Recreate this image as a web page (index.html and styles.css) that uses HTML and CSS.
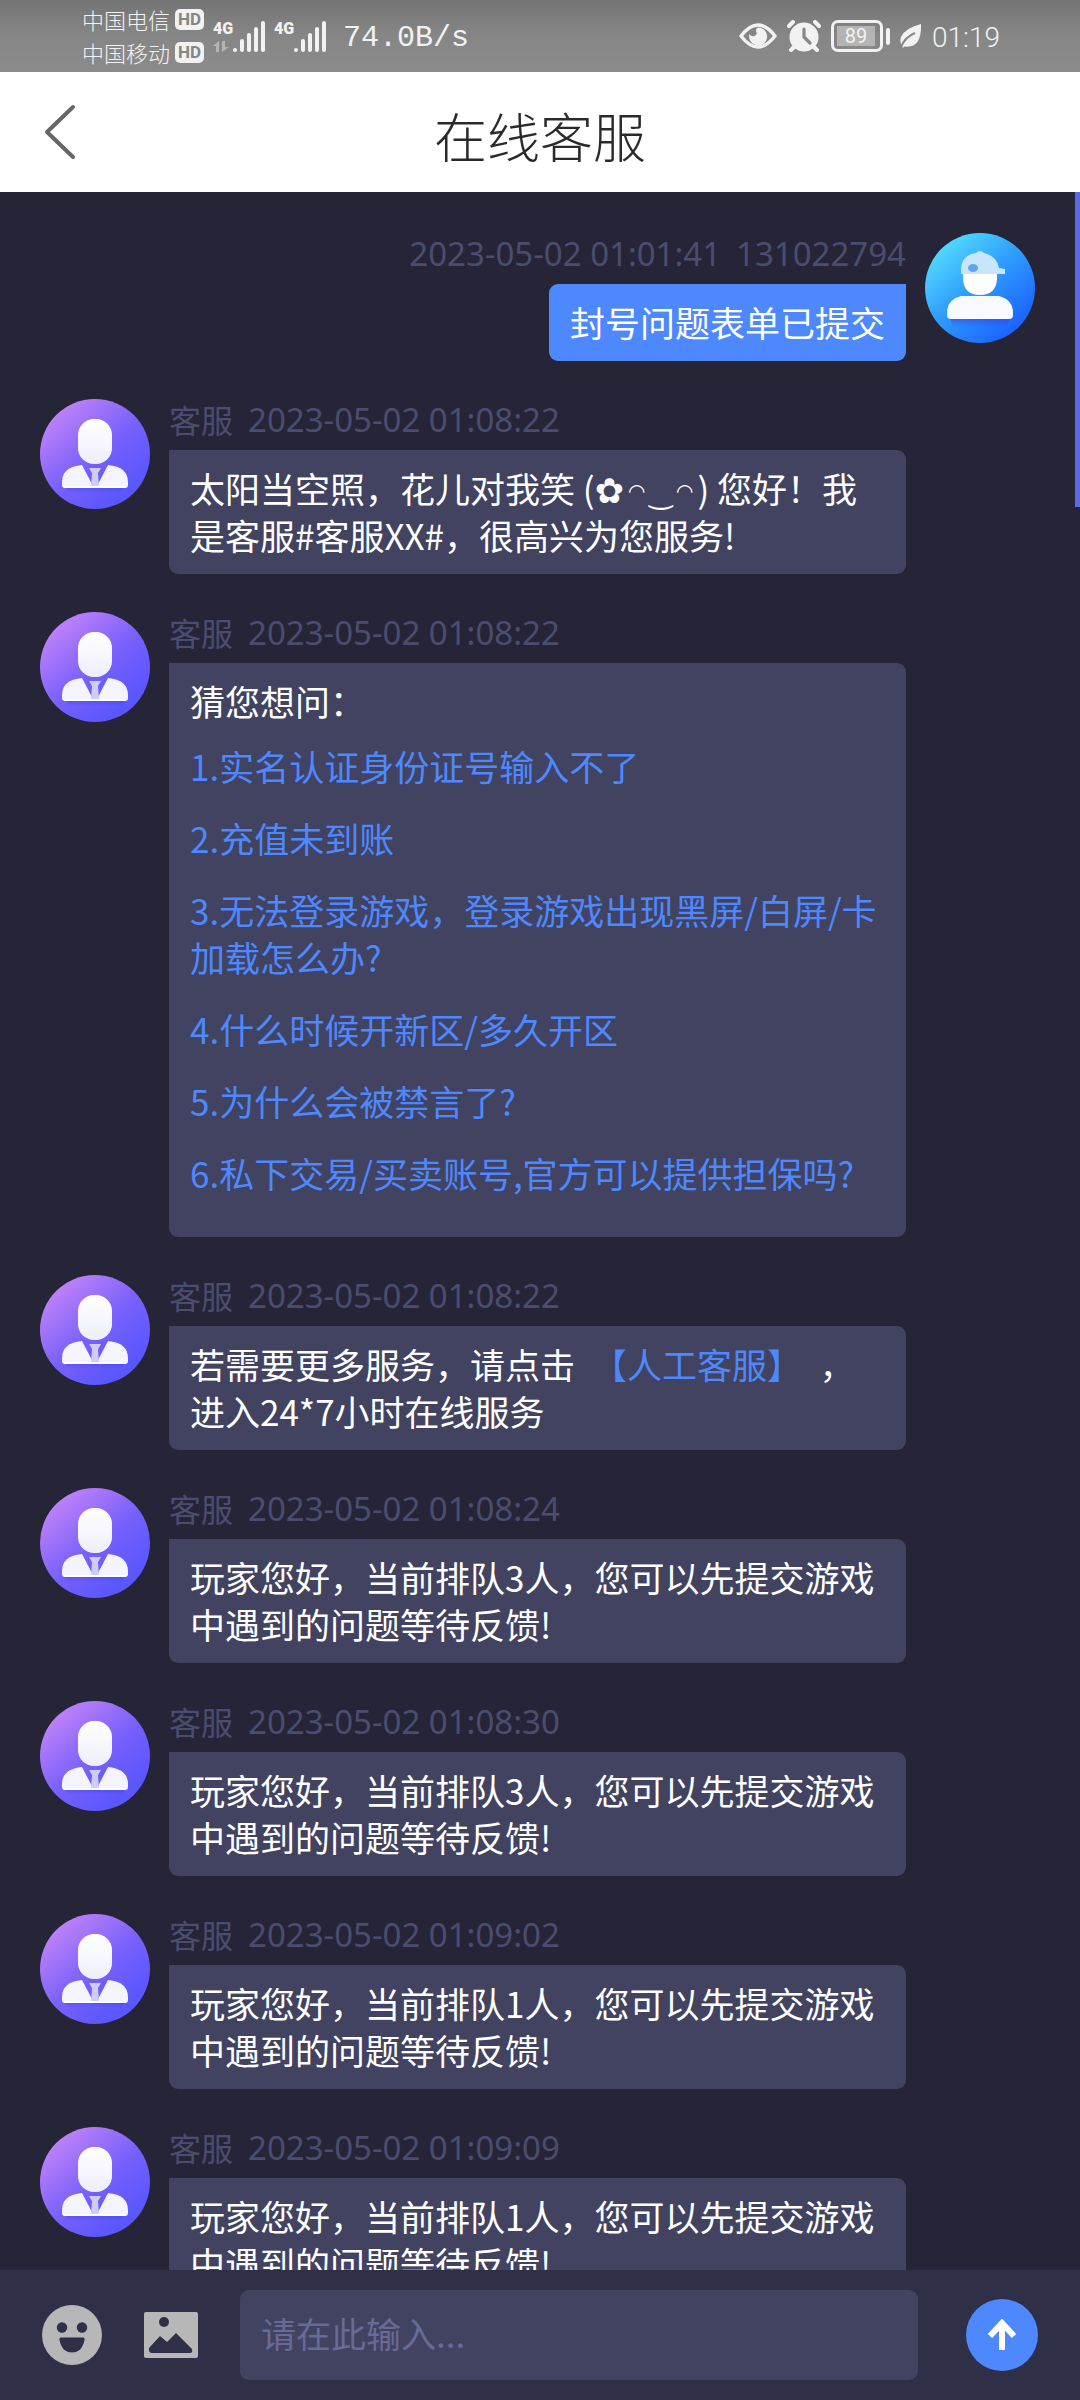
FILE: index.html
```html
<!DOCTYPE html>
<html lang="zh-CN">
<head>
<meta charset="utf-8">
<meta name="viewport" content="width=device-width, initial-scale=1">
<title>在线客服</title>
<link rel="stylesheet" href="styles.css">
</head>
<body>
<svg class="defs" aria-hidden="true">
  <defs>
    <linearGradient id="agent-bg" x1="0.1" y1="0.1" x2="0.75" y2="0.85">
      <stop offset="0" stop-color="#c584f8"/><stop offset="0.6" stop-color="#7760fc"/><stop offset="1" stop-color="#5b57ff"/>
    </linearGradient>
    <linearGradient id="user-bg" x1="0.1" y1="0.1" x2="0.8" y2="0.9">
      <stop offset="0" stop-color="#56dffc"/><stop offset="0.5" stop-color="#2f9cff"/><stop offset="1" stop-color="#1b63ff"/>
    </linearGradient>
    <linearGradient id="agent-body" x1="0" y1="0" x2="0" y2="1">
      <stop offset="0" stop-color="#ffffff"/><stop offset="1" stop-color="#eeeefa"/>
    </linearGradient>
    <linearGradient id="shade" x1="0" y1="0" x2="0" y2="1">
      <stop offset="0" stop-color="#3a39d8" stop-opacity="0.5"/><stop offset="1" stop-color="#3a39d8" stop-opacity="0"/>
    </linearGradient>
  </defs>
  <symbol id="agent" viewBox="0 0 110 110">
    <circle cx="55" cy="55" r="55" fill="url(#agent-bg)"/>
    <path d="M25 86H85L82 94H28Z" fill="url(#shade)"/>
    <rect x="38" y="20" width="34" height="45" rx="16" fill="url(#agent-body)"/>
    <path d="M42 66Q22 68 22 83V86Q22 89 25 89H53V87Z" fill="#f4f4fd"/>
    <path d="M68 66Q88 68 88 83V86Q88 89 85 89H57V87Z" fill="#f4f4fd"/>
    <path d="M49 69H61L58 74L59 88H51L52 74Z" fill="#cfcdf8"/>
    <path d="M24 88H86" stroke="#fff" stroke-width="2"/>
  </symbol>
  <symbol id="user" viewBox="0 0 110 110">
    <circle cx="55" cy="55" r="55" fill="url(#user-bg)"/>
    <path d="M25 86H85L82 94H28Z" fill="url(#shade)"/>
    <path d="M38 40H72V46Q71 62 55 62Q39 62 38 46Z" fill="#fff"/>
    <path d="M36 41V35Q37 22 51 20Q55 16 59 20Q72 23 74 35L80 36V41Z" fill="#c9e4fd"/>
    <ellipse cx="48" cy="35" rx="5" ry="4" fill="#5ba8ee"/>
    <path d="M36 63H74Q88 67 88 80V82Q88 86 84 86H26Q22 86 22 82V80Q22 67 36 63Z" fill="#f7fbff"/>
  </symbol>
  <symbol id="signal" viewBox="0 0 33 31">
    <g fill="#f2f2f2"><circle cx="2" cy="29" r="2"/><rect x="7" y="18" width="4" height="13" rx="2"/><rect x="14" y="12" width="4" height="19" rx="2"/><rect x="21" y="6" width="4" height="25" rx="2"/><rect x="28" y="0" width="4" height="31" rx="2"/></g>
  </symbol>
</svg>

<div class="app">
  <div class="status">
    <div class="carriers">
      <div class="carrier"><span>中国电信</span><b class="hd">HD</b></div>
      <div class="carrier"><span>中国移动</span><b class="hd">HD</b></div>
    </div>
    <div class="net">
      <div class="gen"><b>4G</b>
        <svg width="18" height="12" viewBox="0 0 18 12" fill="#b4b4b4"><path d="M6 0V11H3V5H0ZM9 0H12V6H16L9 11Z"/></svg>
      </div>
      <svg width="33" height="31"><use href="#signal"/></svg>
    </div>
    <div class="net">
      <div class="gen"><b>4G</b></div>
      <svg width="33" height="31"><use href="#signal"/></svg>
    </div>
    <span class="speed">74.0B/s</span>
    <div class="status-right">
      <svg width="38" height="28" viewBox="0 0 38 28"><path d="M2 14Q19-8 36 14Q19 36 2 14Z" fill="none" stroke="#f2f2f2" stroke-width="3.4" stroke-linejoin="round"/><path d="M19 5.500A9 9 0 1 1 10.500 12Q12 15 15.500 14Q19 12.500 17 9Q16.500 7 19 5.500Z" fill="#f2f2f2"/></svg>
      <svg width="34" height="32" viewBox="0 0 34 32"><circle cx="17" cy="17" r="14.500" fill="#f2f2f2"/><path d="M2 6L6 2M32 6L28 2M4 30L8 26M30 30L26 26" stroke="#f2f2f2" stroke-width="4" stroke-linecap="round"/><path d="M17 9V17L23 23" fill="none" stroke="#888" stroke-width="3.200" stroke-linecap="round" stroke-linejoin="round"/></svg>
      <div class="battery"><span class="battery-level">89</span></div>
      <svg class="leaf" width="22" height="24" viewBox="0 0 22 24"><path d="M21 0Q22 25 4 22.500L3 24Q-1 18 1 13Q5 4 21 0Z" fill="#f2f2f2"/><path d="M1 23Q5 13 15 9" fill="none" stroke="#888" stroke-width="2"/></svg>
      <span class="clock">01:19</span>
    </div>
  </div>

  <header class="header">
    <button class="back" type="button" aria-label="返回"><svg width="32" height="56" viewBox="0 0 32 56"><path d="M29 3L3 28L29 53" fill="none" stroke="#666" stroke-width="4" stroke-linecap="round" stroke-linejoin="round"/></svg></button>
    <h1 class="title">在线客服</h1>
  </header>

  <main class="chat">
    <article class="msg msg-user">
      <div class="body">
        <p class="meta"><time>2023-05-02 01:01:41</time><span>131022794</span></p>
        <div class="bubble">封号问题表单已提交</div>
      </div>
      <svg class="avatar"><use href="#user"/></svg>
    </article>
    <article class="msg">
      <svg class="avatar"><use href="#agent"/></svg>
      <div class="body">
        <p class="meta"><span>客服</span><time>2023-05-02 01:08:22</time></p>
        <div class="bubble">太阳当空照，花儿对我笑 (<span class="kaomoji"><span class="flower">✿</span><span class="eye">◠</span>‿<span class="eye">◠</span></span>) 您好！我是客服#客服XX#，很高兴为您服务!</div>
      </div>
    </article>
    <article class="msg">
      <svg class="avatar"><use href="#agent"/></svg>
      <div class="body">
        <p class="meta"><span>客服</span><time>2023-05-02 01:08:22</time></p>
        <div class="bubble">猜您想问：
          <ul class="faq">
            <li><a href="#">1.实名认证身份证号输入不了</a></li>
            <li><a href="#">2.充值未到账</a></li>
            <li><a href="#">3.无法登录游戏，登录游戏出现黑屏/白屏/卡加载怎么办?</a></li>
            <li><a href="#">4.什么时候开新区/多久开区</a></li>
            <li><a href="#">5.为什么会被禁言了?</a></li>
            <li><a href="#">6.私下交易/买卖账号,官方可以提供担保吗?</a></li>
          </ul>
        </div>
      </div>
    </article>
    <article class="msg">
      <svg class="avatar"><use href="#agent"/></svg>
      <div class="body">
        <p class="meta"><span>客服</span><time>2023-05-02 01:08:22</time></p>
        <div class="bubble">若需要更多服务，请点击<a class="human" href="#">【人工客服】</a>，进入24*7小时在线服务</div>
      </div>
    </article>
    <article class="msg">
      <svg class="avatar"><use href="#agent"/></svg>
      <div class="body">
        <p class="meta"><span>客服</span><time>2023-05-02 01:08:24</time></p>
        <div class="bubble">玩家您好，当前排队3人，您可以先提交游戏中遇到的问题等待反馈!</div>
      </div>
    </article>
    <article class="msg">
      <svg class="avatar"><use href="#agent"/></svg>
      <div class="body">
        <p class="meta"><span>客服</span><time>2023-05-02 01:08:30</time></p>
        <div class="bubble">玩家您好，当前排队3人，您可以先提交游戏中遇到的问题等待反馈!</div>
      </div>
    </article>
    <article class="msg">
      <svg class="avatar"><use href="#agent"/></svg>
      <div class="body">
        <p class="meta"><span>客服</span><time>2023-05-02 01:09:02</time></p>
        <div class="bubble">玩家您好，当前排队1人，您可以先提交游戏中遇到的问题等待反馈!</div>
      </div>
    </article>
    <article class="msg">
      <svg class="avatar"><use href="#agent"/></svg>
      <div class="body">
        <p class="meta"><span>客服</span><time>2023-05-02 01:09:09</time></p>
        <div class="bubble">玩家您好，当前排队1人，您可以先提交游戏中遇到的问题等待反馈!</div>
      </div>
    </article>
    <div class="scroll-thumb"></div>
  </main>

  <form class="composer">
    <button class="tool" type="button" aria-label="表情"><svg width="60" height="60" viewBox="0 0 60 60"><circle cx="30" cy="30" r="30" fill="#b7b7b7"/><circle cx="20" cy="22.500" r="5.200" fill="#2f3048"/><circle cx="40" cy="22.500" r="5.200" fill="#2f3048"/><path d="M19 32.500H41Q43 32.500 42.500 35Q40 47.500 30 47.500Q20 47.500 17.500 35Q17 32.500 19 32.500Z" fill="#2f3048"/></svg></button>
    <button class="tool" type="button" aria-label="图片"><svg width="54" height="46" viewBox="0 0 54 46"><rect width="54" height="46" rx="2" fill="#b7b7b7"/><circle cx="20" cy="10" r="5" fill="#2f3048"/><path d="M5 36L16 24L23 30L32 21L48 37Q49 41 46 41H8Q5 41 5 38Z" fill="#2f3048"/></svg></button>
    <input class="field" type="text" placeholder="请在此输入..." aria-label="请在此输入">
    <button class="send" type="submit" aria-label="发送"><svg width="30" height="32" viewBox="0 0 30 32"><path d="M15 31V4M3 17L15 4L27 17" fill="none" stroke="#fff" stroke-width="6"/></svg></button>
  </form>
</div>
</body>
</html>
```
FILE: styles.css
```css
* { box-sizing: border-box; }

body {
  margin: 0;
  font-family: "Noto Sans CJK SC", sans-serif;
  font-size: 35px;
  line-height: 47px;
  color: #fff;
  background: #252537;
}

button { padding: 0; border: 0; background: none; display: flex; }
a { color: #4d88ff; text-decoration: none; }
h1, p, ul { margin: 0; padding: 0; }
svg { display: block; flex: none; }

.defs { position: absolute; width: 0; height: 0; }

.app { display: flex; flex-direction: column; height: 100vh; }

/* System status bar */
.status {
  flex: none;
  display: flex;
  align-items: center;
  height: 72px;
  padding: 0 80px 0 82px;
  color: #f2f2f2;
  background: linear-gradient(#747474, #868686 50%, #8b8b8b);
}
.carriers { display: flex; flex-direction: column; gap: 12px; margin-right: 9px; }
.carrier { display: flex; align-items: center; gap: 5px; font-size: 22px; font-weight: 300; line-height: 21px; }
.hd {
  width: 29px;
  border-radius: 5px;
  background: #f2f2f2;
  color: #858585;
  font: bold 17px/21px "Roboto", sans-serif;
  text-align: center;
}
.net { display: flex; margin-right: 8px; }
.gen { width: 20px; height: 31px; font: bold 16px/16px "Roboto", sans-serif; }
.gen svg { margin-top: 4px; }
.speed { margin-left: 8px; padding-top: 4px; font: 30px/36px "Liberation Mono", monospace; }
.status-right { display: flex; align-items: center; gap: 10px; margin-left: auto; }
.battery {
  position: relative;
  width: 52px;
  height: 32px;
  padding: 3px;
  margin-right: 7px;
  border: 3px solid #f2f2f2;
  border-radius: 7px;
}
.battery::after {
  content: "";
  position: absolute;
  top: 5px;
  right: -10px;
  width: 4px;
  height: 17px;
  border-radius: 2px;
  background: #f2f2f2;
}
.battery-level { display: block; width: 38px; height: 20px; background: #b4b4b4; font: 20px/20px "Roboto", sans-serif; text-align: center; }
.clock { padding-top: 4px; font: 300 28px/36px "Roboto", sans-serif; }

/* Title bar */
.header {
  flex: none;
  display: grid;
  grid-template-columns: 1fr auto 1fr;
  align-items: center;
  height: 120px;
  padding: 0 44px;
  background: #fff;
}
.title { padding-top: 6px; color: #2a2a2a; font-size: 53px; font-weight: 300; line-height: 72px; }

/* Conversation */
.chat {
  position: relative;
  flex: 1;
  min-height: 0;
  overflow: hidden;
  display: flex;
  flex-direction: column;
  gap: 38px;
  padding: 41px 45px 0 40px;
}
.scroll-thumb { position: absolute; top: 0; right: 0; width: 5px; height: 315px; background: #5b69ec; }
.msg { flex: none; display: flex; gap: 19px; padding-right: 129px; }
.msg-user { justify-content: flex-end; padding-right: 0; }
.avatar { width: 110px; height: 110px; }
.body { flex: 1; min-width: 0; }
.meta {
  display: flex;
  gap: 15px;
  height: 51px;
  color: #4b4d70;
  font: 32px/40px "Noto Sans CJK SC", sans-serif;
}
.meta time, .msg-user .meta { font: 33px/41px "Noto Sans", sans-serif; }
.bubble { padding: 14px 21px 16px; border-radius: 0 9px 9px 9px; background: #414361; }
.msg-user .body { display: flex; flex-direction: column; align-items: flex-end; }
.msg-user .bubble { border-radius: 9px 0 9px 9px; background: #4d88ff; }
.kaomoji { font-family: "DejaVu Sans", sans-serif; font-size: 28px; line-height: 1; }
.flower { font-size: 35px; }
.eye { margin: 0 4px; font-size: 20px; vertical-align: 5px; }
.faq { display: flex; flex-direction: column; gap: 25px; padding: 18px 0 25px; list-style: none; }
.human { padding: 0 35px 0 17px; }

/* Message composer */
.composer {
  flex: none;
  display: flex;
  align-items: center;
  gap: 42px;
  height: 130px;
  padding: 0 42px;
  background: #2f3048;
}
.field {
  flex: 1;
  min-width: 0;
  height: 90px;
  margin-right: 6px;
  padding: 0 21px 6px;
  border: 0;
  border-radius: 9px;
  background: #414361;
  color: #fff;
  font: inherit;
}
.field::placeholder { color: #686a98; opacity: 1; }
.send { align-items: center; justify-content: center; width: 72px; height: 72px; border-radius: 50%; background: #4d88ff; }
```
